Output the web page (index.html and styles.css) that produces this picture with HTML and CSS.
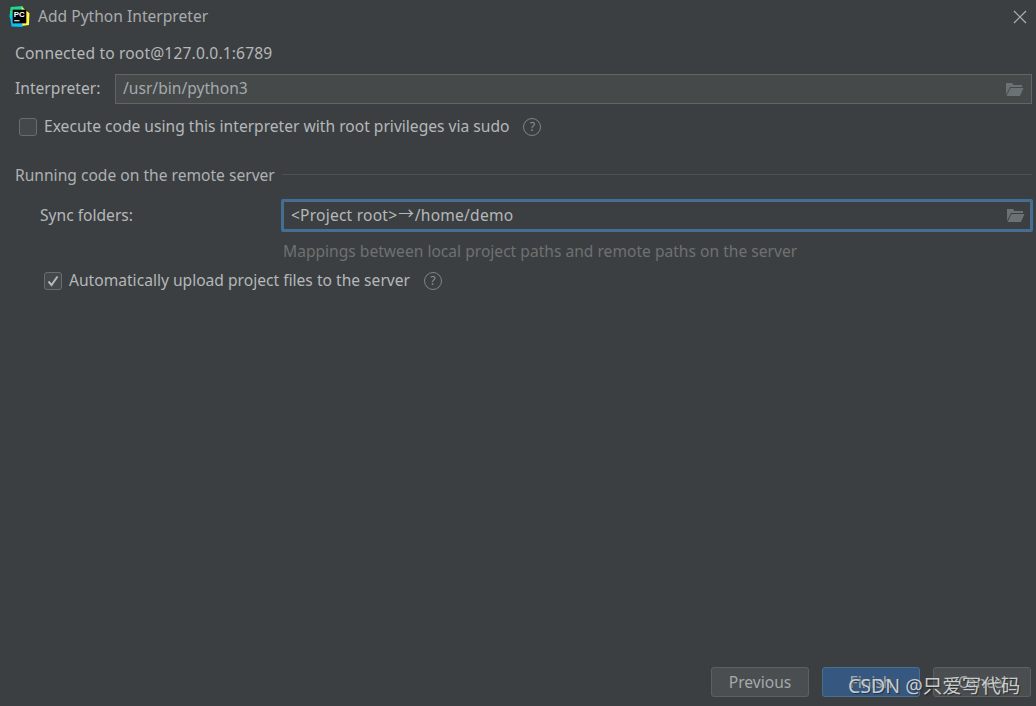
FILE: index.html
```html
<!DOCTYPE html>
<html lang="en">
<head>
<meta charset="utf-8">
<title>Add Python Interpreter</title>
<link rel="stylesheet" href="styles.css">
</head>
<body>
<div class="dialog">
  <header class="titlebar">
    <svg class="logo" width="21" height="21" viewBox="0 0 20 20">
      <path d="M1.5 1 L13 0 L15 5 L10 12 L0.5 11 Z" fill="#21d789"/>
      <path d="M12 1 L19.5 7 L19 18 L12 19 Z" fill="#fcf84a"/>
      <path d="M0.5 8 L2.5 19.5 L13 20 L12 12 Z" fill="#07c3f2"/>
      <rect x="3.5" y="3.5" width="13" height="13" fill="#000"/>
      <text x="4.6" y="10.6" class="logo-text">PC</text>
      <rect x="5" y="13.4" width="5" height="1.2" fill="#ddd"/>
    </svg>
    <span class="title">Add Python Interpreter</span>
    <svg class="close" width="14" height="14" viewBox="0 0 14 14"><path d="M1 1 L13 13 M13 1 L1 13" stroke="#aeb2b4" stroke-width="1.2" fill="none"/></svg>
  </header>
  <main class="content">
    <div class="connected">Connected to root@127.0.0.1:6789</div>
    <div class="row interpreter-row">
      <label class="label">Interpreter:</label>
      <div class="field disabled">
        <span class="value">/usr/bin/python3</span>
        <svg class="folder" width="19" height="15" viewBox="0 0 19 15"><path d="M1 1 H7 L8.5 3 H17 V5 H5 L1 13 Z" fill="#6b7274"/><path d="M5.5 6 H18.5 L15 14 H1.5 Z" fill="#6b7274"/></svg>
      </div>
    </div>
    <div class="check-row sudo-row">
      <span class="checkbox"></span>
      <span class="check-label">Execute code using this interpreter with root privileges via sudo</span>
      <span class="help">?</span>
    </div>
    <div class="group-title"><span>Running code on the remote server</span><i class="rule"></i></div>
    <div class="group">
      <div class="row sync-row">
        <label class="label sync-label">Sync folders:</label>
        <div class="field focused">
          <span class="value mapping">&lt;Project root&gt;<span class="arrow">→</span>/home/demo</span>
          <svg class="folder" width="19" height="15" viewBox="0 0 19 15"><path d="M1 1 H7 L8.5 3 H17 V5 H5 L1 13 Z" fill="#6b7274"/><path d="M5.5 6 H18.5 L15 14 H1.5 Z" fill="#6b7274"/></svg>
        </div>
      </div>
      <div class="hint">Mappings between local project paths and remote paths on the server</div>
      <div class="check-row upload-row">
        <span class="checkbox checked"><svg width="12" height="12" viewBox="0 0 12 12"><path d="M1.5 6.5 L4.5 10 L10.5 1.5" stroke="#b4b8ba" stroke-width="2" fill="none"/></svg></span>
        <span class="check-label">Automatically upload project files to the server</span>
        <span class="help">?</span>
      </div>
    </div>
  </main>
  <footer class="buttons">
    <button class="btn">Previous</button>
    <button class="btn primary">Finish</button>
    <button class="btn">Cancel</button>
  </footer>
  <div class="watermark">CSDN @只爱写代码</div>
</div>
</body>
</html>
```
FILE: styles.css
```css
* { box-sizing: border-box; }
html, body { margin: 0; height: 100%; }
body { background: #3c3f41; overflow: hidden; }
.dialog {
  position: relative;
  width: 1036px;
  height: 706px;
  display: flex;
  flex-direction: column;
  background: #3c3f41;
  color: #b4b8ba;
  font: 15.6px/20px "Noto Sans", "Noto Sans CJK SC", sans-serif;
}
.titlebar {
  display: flex;
  align-items: center;
  height: 33px;
  flex: none;
  padding: 0 9px 0 9px;
}
.logo { flex: none; }
.logo-text { font: bold 7.5px "Liberation Sans", sans-serif; fill: #fff; }
.title { margin-left: 8px; color: #a8acae; }
.title, .label, .value, .check-label { padding-bottom: 2px; }
.close { margin-left: auto; }
.content { flex: 1; padding: 10px 4px 0 15px; display: flex; flex-direction: column; }
.connected { height: 20px; letter-spacing: .15px; }
.row { display: flex; align-items: center; }
.interpreter-row { margin-top: 11px; }
.label { width: 100px; flex: none; }
.field {
  flex: 1;
  display: flex;
  align-items: center;
  justify-content: space-between;
  height: 30px;
  padding: 0 7px 0 7px;
  border: 1px solid #646464;
  background: #45494a;
}
.field.disabled .value { color: #a5a9ab; }
.field.focused {
  height: 33px;
  margin: 0 -1px 0 -1px;
  background: #3c3f41;
  border: 3px solid #466d94;
  border-radius: 2px;
  padding: 0 5px 0 7px;
}
.mapping { letter-spacing: .2px; }
.arrow { display: inline-block; margin: 0 1px; letter-spacing: 0; position: relative; top: -2px; }
.folder { flex: none; }
.check-row { display: flex; align-items: center; }
.checkbox {
  width: 18px;
  height: 18px;
  flex: none;
  display: flex;
  align-items: center;
  justify-content: center;
  border: 1px solid #6b6b6b;
  border-radius: 3px;
  background: #43494a;
}
.check-label { margin-left: 7px; }
.help {
  width: 18px;
  height: 18px;
  margin-left: 14px;
  flex: none;
  display: flex;
  align-items: center;
  justify-content: center;
  border: 1.5px solid #7f8486;
  border-radius: 50%;
  color: #8a8f91;
  font-size: 12.5px;
  line-height: 1;
}
.sudo-row { margin-top: 12px; padding-left: 4px; }
.group-title { display: flex; align-items: center; margin-top: 27px; color: #adb1b3; }
.group-title .rule { flex: 1; height: 1px; background: #515151; margin: 0 0 1px 7px; }
.group { padding-left: 25px; }
.sync-row { margin-top: 14px; }
.sync-label { width: 242px; }
.hint { margin: 9px 0 0 243px; height: 20px; color: #6e7173; }
.upload-row { margin-top: 9px; padding-left: 4px; }
.buttons {
  flex: none;
  display: flex;
  justify-content: flex-end;
  gap: 13px;
  padding: 0 5px 9px 0;
}
.btn {
  width: 98px;
  height: 30px;
  padding: 0 0 1px;
  border: 1px solid #5e6060;
  border-radius: 3px;
  background: #4a4e50;
  color: #a5a9ab;
  font: inherit;
}
.btn.primary { background: #365880; border-color: #4c708c; color: #a5a9ab; }
.watermark {
  position: absolute;
  left: 848px;
  top: 672px;
  font-size: 19.5px;
  line-height: 28px;
  color: #c8cccd;
  white-space: nowrap;
  text-shadow: 1px 1px 1px rgba(0,0,0,.45);
}
```
